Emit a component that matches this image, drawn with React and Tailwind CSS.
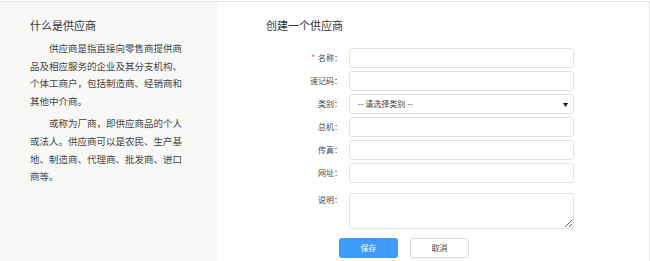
import { useState } from "react";

const fields = [
  { key: "name", label: "名称：", required: true },
  { key: "code", label: "速记码：" },
  { key: "category", label: "类别：", type: "select" },
  { key: "phone", label: "总机：" },
  { key: "fax", label: "传真：" },
  { key: "site", label: "网址：" },
];

export default function App() {
  const [form, setForm] = useState({});

  const update = (key) => (e) => setForm({ ...form, [key]: e.target.value });

  return (
    <div
      className="w-[650px] h-[261px] bg-white overflow-hidden"
      style={{ fontFamily: '"Noto Sans CJK SC", "Noto Sans", sans-serif' }}
    >
      <div className="mt-px h-[260px] border-t border-r border-[#e4e4e4] flex">
        {/* 左侧说明 */}
        <div className="w-[217px] shrink-0 bg-[#f8f8f7] pl-[30px] pt-[15px]">
          <h2 className="text-[11px] leading-[16px] text-[#333]">什么是供应商</h2>
          <div className="w-[154px] mt-[7px] text-[9.5px] leading-[17.6px] text-[#444]">
            <p className="indent-[2em]">
              供应商是指直接向零售商提供商品及相应服务的企业及其分支机构、个体工商户，包括制造商、经销商和其他中介商。
            </p>
            <p className="indent-[2em] mt-[5px]">
              或称为厂商，即供应商品的个人或法人。供应商可以是农民、生产基地、制造商、代理商、批发商、进口商等。
            </p>
          </div>
        </div>

        {/* 右侧表单 */}
        <div className="flex-1 pl-[49px] pt-[15px]">
          <h1 className="text-[11px] leading-[16px] text-[#333]">创建一个供应商</h1>

          <div className="mt-[15px] flex flex-col gap-[3px]">
            {fields.map((f) => (
              <div key={f.key} className="flex items-center">
                <label className="w-[77px] pr-[1px] text-right text-[8px] text-[#444]">
                  {f.required && <span className="text-[#e33] mr-[3px]">*</span>}
                  {f.label}
                </label>
                {f.type === "select" ? (
                  <div className="relative ml-[6px] w-[225px] h-[20px] border border-[#e2e2e2] rounded-[3px] flex items-center pl-[8px] text-[8px] text-[#444]">
                    -- 请选择类别 --
                    <span className="absolute right-[5px] top-[5px] text-[5px] leading-[8px] text-black">▼</span>
                  </div>
                ) : (
                  <input
                    value={form[f.key] || ""}
                    onChange={update(f.key)}
                    className="ml-[6px] w-[225px] h-[20px] border border-[#e2e2e2] rounded-[3px] px-2 text-[8px] outline-none"
                  />
                )}
              </div>
            ))}

            <div className="flex items-start mt-[7px]">
              <label className="w-[77px] pr-[1px] pt-[1px] text-right text-[8px] text-[#444]">说明：</label>
              <textarea
                value={form.note || ""}
                onChange={update("note")}
                className="ml-[6px] w-[225px] h-[36px] border border-[#e2e2e2] rounded-[3px] px-2 text-[8px] outline-none"
              />
            </div>
          </div>

          <div className="mt-[9px] ml-[73px] flex gap-[12px]">
            <button className="w-[59px] h-[20px] rounded-[3px] bg-[#3c9cf7] text-white text-[8px]">保存</button>
            <button className="w-[59px] h-[20px] rounded-[3px] border border-[#dcdcdc] bg-white text-[#444] text-[8px]">
              取消
            </button>
          </div>
        </div>
      </div>
    </div>
  );
}
